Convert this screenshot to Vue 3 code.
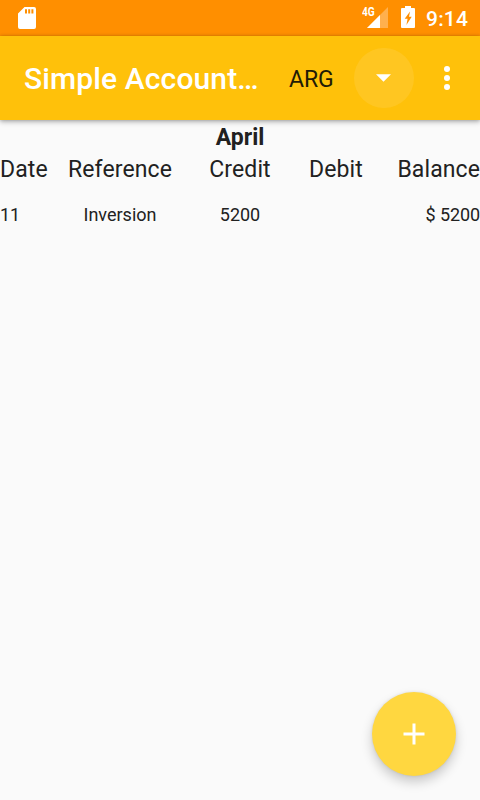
<script setup>
const headers = ['Date', 'Reference', 'Credit', 'Debit', 'Balance']
const rows = [['11', 'Inversion', '5200', '', '$ 5200']]
</script>

<template>
  <div class="screen">
    <div class="status">
      <svg class="sd" viewBox="0 0 18 22" width="18" height="22">
        <path fill="#fff" fill-rule="evenodd" d="M6.5 0H16a2 2 0 0 1 2 2v18a2 2 0 0 1-2 2H2a2 2 0 0 1-2-2V6.500zM7 2.200V6.500h2V2.200zM10.200 2.200V6.500h2V2.200zM13.400 2.200V6.500h2V2.200z" />
      </svg>
      <div class="signal">
        <span class="net">4G</span>
        <svg viewBox="0 0 21 21" width="21" height="21">
          <path fill="#fff" fill-opacity=".3" d="M21 0V21H0z" />
          <path fill="#fff" d="M13 8V21H0z" />
        </svg>
      </div>
      <svg class="battery" viewBox="0 0 14 22" width="14" height="22">
        <path fill="#fff" fill-rule="evenodd" d="M4 0h6v2h3q1 0 1 1v18q0 1-1 1H1q-1 0-1-1V3q0-1 1-1h3zM9 5.500L3.700 12.800H6.600L5.400 19L10.700 10.800H8z" />
      </svg>
      <span class="clock">9:14</span>
    </div>
    <header class="toolbar">
      <h1>Simple Account…</h1>
      <span class="account">ARG</span>
      <button class="drop" aria-label="Select account">
        <svg viewBox="0 0 15 8" width="15" height="8"><path fill="#fff" d="M0 .3h15L7.500 7.700z" /></svg>
      </button>
      <button class="more" aria-label="More options">
        <svg viewBox="0 0 6 24" width="6" height="24" fill="#fff">
          <circle cx="3" cy="3" r="3" /><circle cx="3" cy="12" r="3" /><circle cx="3" cy="21" r="3" />
        </svg>
      </button>
    </header>
    <main>
      <h2>April</h2>
      <div class="row head"><span v-for="h in headers" :key="h">{{ h }}</span></div>
      <div v-for="(r, i) in rows" :key="i" class="row entry">
        <span v-for="(c, j) in r" :key="j">{{ c }}</span>
      </div>
    </main>
    <button class="fab" aria-label="Add">
      <svg viewBox="0 0 22 22" width="22" height="22"><path fill="#fff" d="M9.500 .5h3v9h9v3h-9v9h-3v-9h-9v-3h9z" /></svg>
    </button>
  </div>
</template>

<style>
body { background: #fafafa; overflow: hidden; }
</style>

<style scoped>
.screen {
  position: relative;
  height: 800px;
  width: 480px;
  background: #fafafa;
  font-family: Roboto, sans-serif;
  color: #212121;
  overflow: hidden;
}
svg { display: block; flex: none; }
button { border: 0; padding: 0; background: none; display: flex; align-items: center; justify-content: center; }
.status {
  height: 36px;
  box-sizing: border-box;
  padding: 0 12px 0 18px;
  display: flex;
  align-items: flex-start;
  background: #ff8f00;
}
.sd { margin-top: 7px; }
.signal { margin: 7px 13px 0 auto; display: flex; }
.net {
  width: 14px;
  margin: -2px -9px 0 0;
  color: #fff;
  font: 700 13px/14px Roboto, sans-serif;
  transform: scaleX(.78);
  transform-origin: left;
}
.battery { margin-top: 6px; }
.clock { width: 42px; margin-left: 11px; color: #fff; font-size: 21px; font-weight: 500; line-height: 38px; letter-spacing: .2px; white-space: nowrap; }
.toolbar {
  position: relative;
  height: 84px;
  box-sizing: border-box;
  padding-left: 24px;
  display: flex;
  align-items: center;
  background: #ffc10a;
  box-shadow: 0 2px 5px rgba(0, 0, 0, .28), 0 0 3px rgba(0, 0, 0, .18);
}
h1 {
  width: 236px;
  margin: 0;
  padding-top: 2px;
  color: #fff;
  font-size: 30px;
  font-weight: 500;
  line-height: 40px;
  letter-spacing: .12px;
  white-space: nowrap;
}
.account { width: 65px; margin-left: 29px; padding-top: 2px; font-size: 23px; letter-spacing: -.1px; color: #221b06; }
.drop { width: 60px; height: 60px; border-radius: 50%; background: #ffc621; }
.drop svg { margin-right: 1px; }
.more { width: 66px; height: 60px; }
h2 { margin: 0; padding-top: 2px; font-size: 23px; font-weight: 700; line-height: 32px; text-align: center; }
.row { display: grid; grid-template-columns: 1fr 3fr 2fr 2fr 2fr; text-align: center; white-space: nowrap; }
.row span:first-child { text-align: left; }
.row span:last-child { text-align: right; }
.head { font-size: 23px; line-height: 32px; letter-spacing: .1px; }
.entry { margin-top: 14px; font-size: 18px; line-height: 30px; }
.entry span:last-child { letter-spacing: -.1px; }
.fab {
  position: absolute;
  right: 24px;
  bottom: 24px;
  width: 84px;
  height: 84px;
  border-radius: 50%;
  background: #ffd740;
  box-shadow: 0 6px 12px rgba(0, 0, 0, .2), 0 0 3px rgba(0, 0, 0, .1);
}
</style>
